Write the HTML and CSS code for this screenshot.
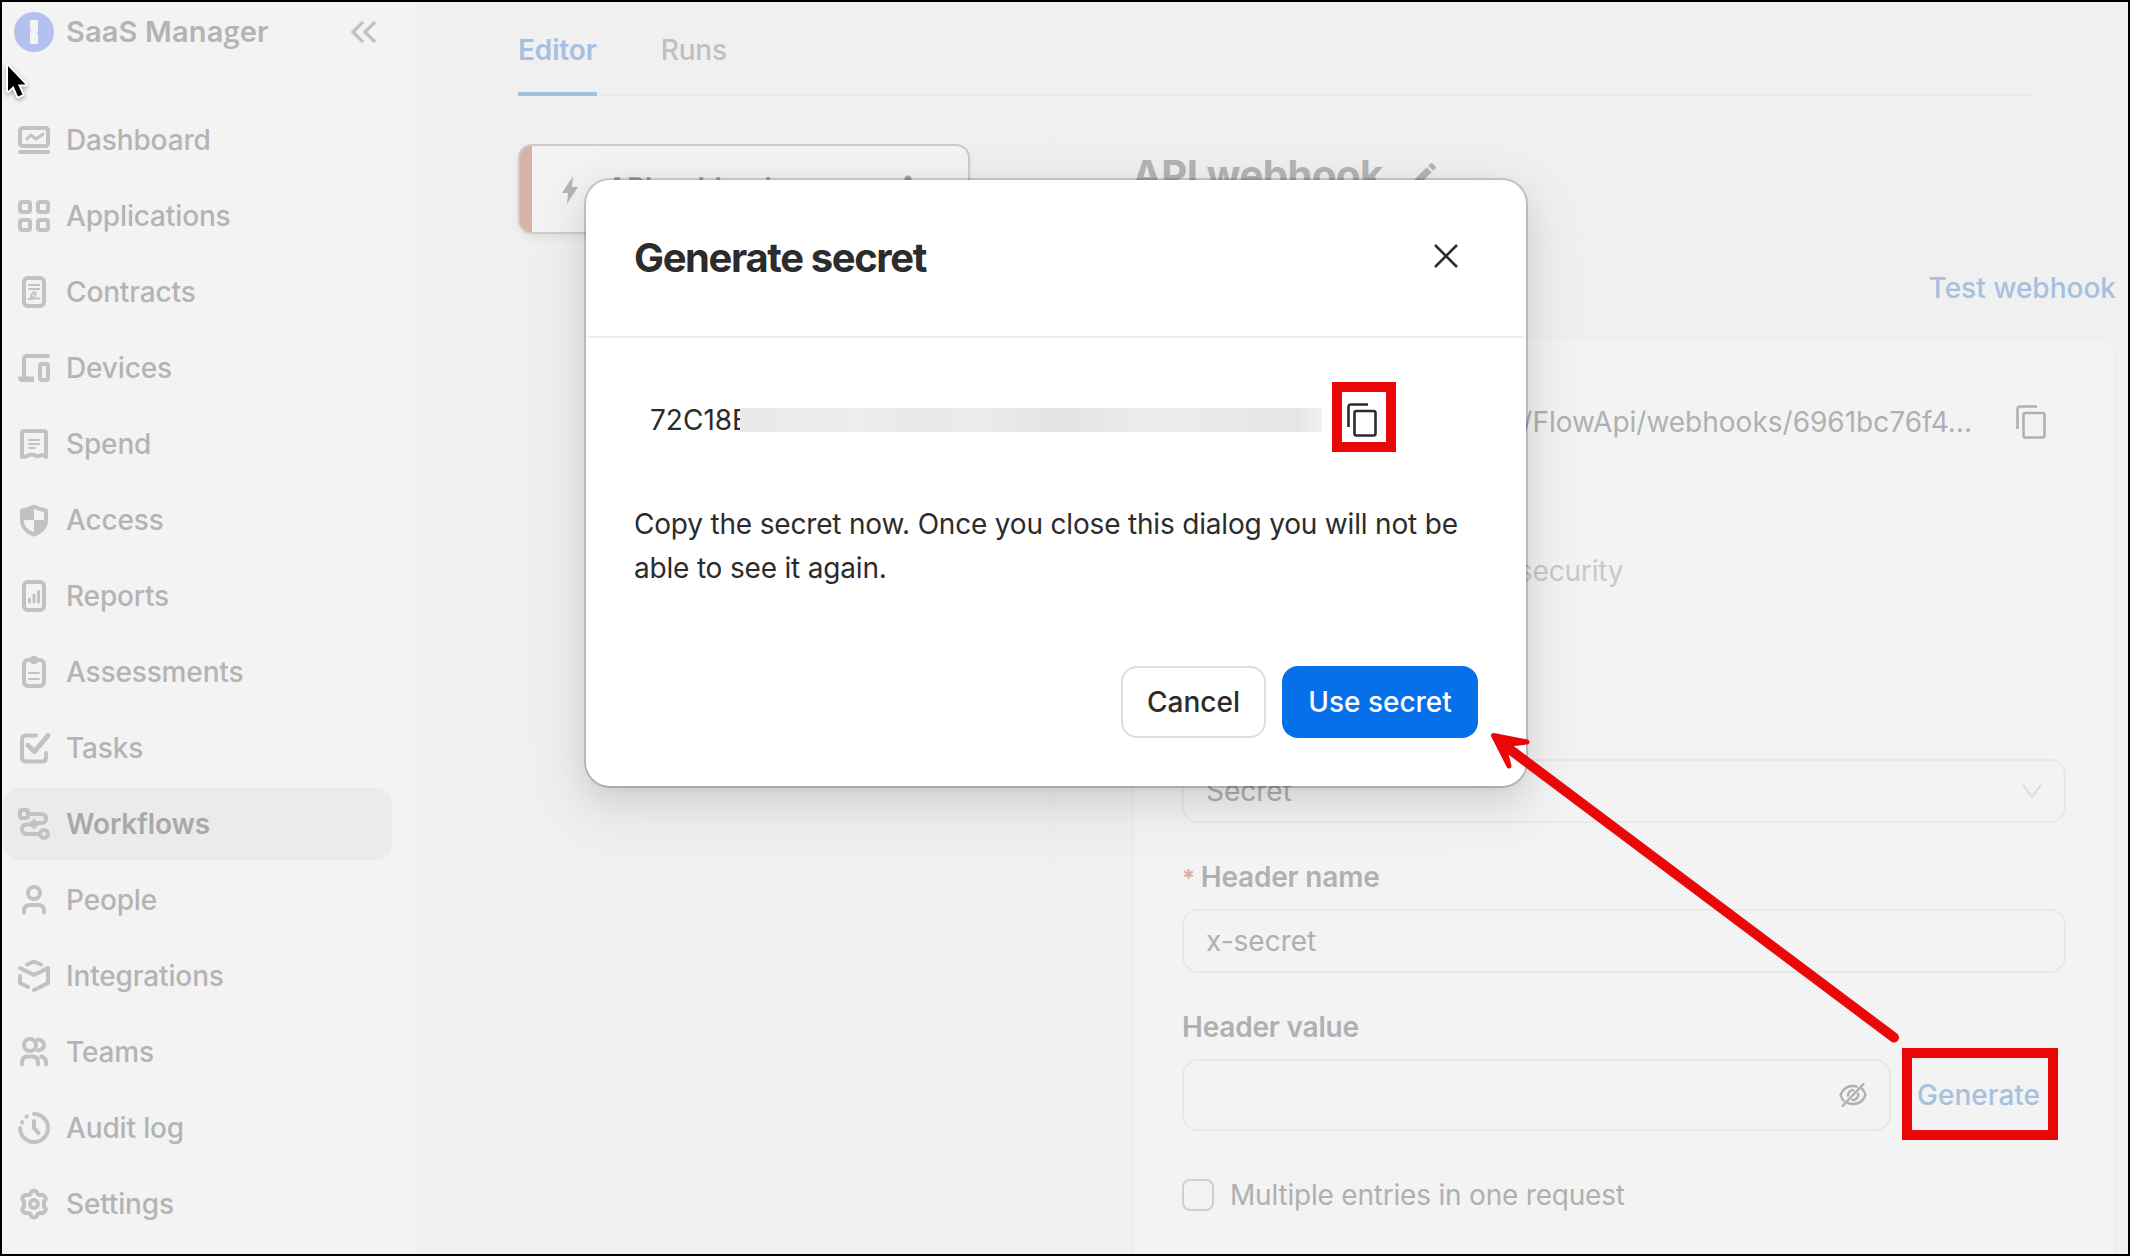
FILE: index.html
```html
<!DOCTYPE html>
<html lang="en">
<head>
<meta charset="utf-8">
<title>SaaS Manager - Workflows</title>
<link rel="stylesheet" href="styles.css">
</head>
<body>
<div class="app">
  <aside class="sidebar">
    <header class="brand">
      <svg class="logo" viewBox="0 0 40 40"><circle cx="20" cy="20" r="20" fill="#b3c1f0"/><path fill="#f3f3f3" d="M17.200 8h5.600a1.200 1.200 0 0 1 1.200 1.200v10.300l-1.500 1.300 1.500 1.300v8.700a1.200 1.200 0 0 1-1.200 1.200h-5.600a1.200 1.200 0 0 1-1.200-1.200V19.500l1.500-1.300-1.500-1.300V9.200A1.200 1.200 0 0 1 17.200 8z"/></svg>
      <span class="brand-name">SaaS Mana<span class="alt">g</span>er</span>
      <svg class="collapse" viewBox="0 0 26 22"><path d="M12 1 2 11l10 10M24 1 14 11l10 10"/></svg>
    </header>
    <nav class="nav">
      <a class="item"><svg viewBox="0 0 32 32"><rect x="2" y="4" width="28" height="18" rx="2.500"/><path d="M2 28h28"/><path class="w3" d="m9 15 4-4 5 4 7-5"/></svg>Dashboard</a>
      <a class="item"><svg viewBox="0 0 32 32"><rect x="2" y="2" width="10" height="10" rx="2"/><rect x="20" y="2" width="10" height="10" rx="2"/><rect x="2" y="20" width="10" height="10" rx="2"/><rect x="20" y="20" width="10" height="10" rx="2"/></svg>Applications</a>
      <a class="item"><svg viewBox="0 0 32 32"><rect x="6" y="2" width="20" height="28" rx="4"/><path class="w2" d="M11 9h10M11 13h10M10.500 23c4 0 8-4 7-6s-5 1-4.500 4 3.500 1.500 4.500 1.500h4"/></svg>Contracts</a>
      <a class="item"><svg viewBox="0 0 32 32"><path d="M30 4H9Q6 4 6 7v18"/><path class="solid" d="M0 24.500h16V30H4q-4 0-4-5.500z"/><rect x="22" y="12" width="8" height="16" rx="2"/></svg>Devices</a>
      <a class="item"><svg viewBox="0 0 32 32"><path d="M4 29V5q0-2 2-2h20q2 0 2 2v24q-3-3-6-1.500-3 1.500-6-.5-3-1-6 .5-3 1.500-6 1.500z"/><path class="w2" d="M11 12h10M11 16h10M11 20h6"/></svg>Spend</a>
      <a class="item"><svg viewBox="0 0 32 32"><path d="M16 2.500c3.500 2 7 3.500 12 4V17c0 6-5 11-12 13.500C9 28 4 23 4 17V6.500c5-.5 8.500-2 12-4z"/><path class="solid" d="M4 6 16 2v14H4zM16 16h12c0 7-5 12-12 14z"/></svg>Access</a>
      <a class="item"><svg viewBox="0 0 32 32"><rect x="6" y="2" width="20" height="28" rx="4"/><path class="w3" d="M11.500 22v-3M16 22v-7M20.500 22V11.500"/></svg>Reports</a>
      <a class="item"><svg viewBox="0 0 32 32"><rect x="6" y="4" width="20" height="26" rx="4"/><path class="w2" d="M11 17h10M11 23h10"/><path class="solid" d="M14 0h4l2 2v4l-2 2h-4l-2-2V2z"/></svg>Assessments</a>
      <a class="item"><svg viewBox="0 0 32 32"><path d="M18 3.500H8q-4 0-4 4v18q0 4 4 4h16q4 0 4-4V21"/><path class="w4b" d="m10 13.500 6.500 6L30 3.500"/></svg>Tasks</a>
      <a class="item active"><svg viewBox="0 0 32 32"><rect x="2" y="2" width="8" height="8" rx="2"/><path d="M12 6h11.500q4.500 0 4.500 4.500T23.500 15H18M14 16.500H9q-5 0-5 4.700T9 26h12"/><circle cx="26" cy="26" r="4"/><path class="solid" d="m16 10.500 5.500 5.500-5.500 5.500-5.500-5.500z"/></svg>Workflows</a>
      <a class="item"><svg viewBox="0 0 32 32"><circle cx="16" cy="9" r="6"/><path d="M6 28.500v-1.500q0-6 6.500-6h7q6.500 0 6.500 6v1.500"/></svg>People</a>
      <a class="item"><svg viewBox="0 0 32 32"><path d="m9 4.500 7-3 7 3M2 8l14 7 14-7v15l-14 7M2 16v7l8 4"/></svg>Integrations</a>
      <a class="item"><svg viewBox="0 0 32 32"><circle cx="12" cy="9" r="6"/><path d="M4 28.500v-2q0-6 6-6h4q6 0 6 6v2M20 3.500q6 1 6 5.500t-6 5.500M23 20.500q5 1 5 6v2"/></svg>Teams</a>
      <a class="item"><svg viewBox="0 0 32 32"><path d="M16 2a14 14 0 1 1-14 14"/><path class="dash" d="M4 10.500l.2-.4M8.500 4.700l.4-.3"/><path d="M16 9v7l4.500 5"/></svg>Audit log</a>
      <a class="item"><svg viewBox="0 0 32 32"><path d="M13.500 3.500q2.500-2 5 0l1 2.500 2.200 1.300 2.800-.5q3 1.200 3.300 4.200L26 13.500v5l1.800 2.500q-.3 3-3.300 4.200l-2.800-.5L19.500 26l-1 2.500q-2.500 2-5 0l-1-2.500-2.200-1.300-2.800.5q-3-1.200-3.300-4.200L6 18.500v-5L4.200 11q.3-3 3.300-4.200l2.800.5L12.500 6z"/><circle cx="16" cy="16" r="4"/></svg>Settings</a>
    </nav>
  </aside>

  <main class="main">
    <div class="tabs"><span class="tab on">Editor</span><span class="tab">Runs</span></div>
    <div class="workspace">
      <section class="canvas">
        <div class="step">
          <svg class="bolt" viewBox="0 0 16 28"><path d="M11 0 0 17h6L5 28 16 11h-6z"/></svg>
          <span class="step-name">API webhook</span>
          <svg class="kebab" viewBox="0 0 8 32"><circle cx="4" cy="4" r="3.500"/><circle cx="4" cy="15" r="3.500"/><circle cx="4" cy="26" r="3.500"/></svg>
        </div>
      </section>
      <section class="detail">
        <h1 class="detail-title">API webhook
          <svg class="pencil" viewBox="0 0 24 24"><path d="M3 17.250V21h3.750L17.810 9.940l-3.750-3.750zM20.710 7.040a1 1 0 0 0 0-1.410l-2.340-2.340a1 1 0 0 0-1.410 0l-1.830 1.830 3.750 3.750z"/></svg>
        </h1>
        <div class="actions"><a class="link">Test webhook</a></div>
        <div class="panel">
          <div class="url-row"><span class="url">/FlowApi/webhooks/6961bc76f4...</span>
            <svg class="copy" viewBox="0 0 30 34"><path d="M21 1.500H4Q1.500 1.500 1.500 4v20"/><rect x="7.500" y="8" width="21" height="24.500" rx="2"/></svg>
          </div>
          <div class="security">security</div>
          <div class="field select"><span>Secret</span><svg viewBox="0 0 20 14"><path d="m1 1 9 12 9-12"/></svg></div>
          <div class="label"><i>*</i>Header name</div>
          <div class="field">x-secret</div>
          <div class="label">Header value</div>
          <div class="value-row">
            <div class="field tall"><svg viewBox="0 0 28 24"><path d="M22 4.800c2 1.600 3.600 4 4.500 7.200-2.200 6-6.500 9-12.500 9-2.200 0-4-.4-5.700-1.100M5.500 18.700C3.800 17.200 2.400 15 1.500 12 3.700 6 8 3 14 3c1.700 0 3.200.3 4.600.8M18.700 10a5 5 0 0 1-6.300 6.700M9.300 13.500a5 5 0 0 1 6-6.200M25 .5 3 23.500"/></svg></div>
            <a class="link">Generate</a>
          </div>
          <div class="check-row"><span class="check"></span>Multiple entries in one request</div>
        </div>
      </section>
    </div>
  </main>
</div>

<div class="dialog">
  <header class="dialog-head"><h2>Generate secret</h2><svg viewBox="0 0 24 24"><path d="m1 1 22 22M23 1 1 23"/></svg></header>
  <div class="secret-row">
    <span class="secret">72C18E</span><span class="redacted"></span>
    <svg class="copy" viewBox="0 0 30 34"><path d="M21 1.500H4Q1.500 1.500 1.500 4v20"/><rect x="7.500" y="8" width="21" height="24.500" rx="2"/></svg>
  </div>
  <p class="note">Copy the secret now. Once you close this dialog you will not be<br>able to see it again.</p>
  <footer class="dialog-foot"><button class="btn">Cancel</button><button class="btn primary">Use secret</button></footer>
</div>

<svg class="annotations" viewBox="0 0 2130 1256">
  <rect x="1337" y="387" width="54" height="60"/>
  <rect x="1907" y="1053" width="146" height="82"/>
  <path d="M1508 748 1894 1037.500"/>
  <path class="head" d="m1493.500 735.500 33.500 6.500-17 2-5 6 4 16z"/>
</svg>
<svg class="cursor" viewBox="0 0 28 40"><path d="M4 3v25l5.500-5 4.500 10.500 4.500-2-4.500-10h7.500z"/></svg>
<div class="frame"></div>
</body>
</html>
```
FILE: styles.css
```css
* { box-sizing: border-box; }
body { margin: 0; width: 2130px; height: 1256px; overflow: hidden; position: relative; background: #f0f0f0; font: 400 28px/40px Inter, "Liberation Sans", sans-serif; color: #b0b0b0; }
svg { fill: none; stroke: currentColor; flex: none; display: block; }
.app { display: flex; height: 1256px; }

.sidebar { width: 418px; background: #f3f3f3; border-right: 2px solid #eee; padding-left: 3px; flex: none; }
.brand { display: flex; align-items: center; height: 64px; padding-left: 11px; }
.logo { width: 40px; height: 40px; stroke: none; }
.brand-name { margin-left: 12px; margin-top: -2px; width: 273px; font-size: 29px; letter-spacing: .15px; font-weight: 600; color: #b4b4b4; white-space: nowrap; }
.alt { font-family: "Open Sans", sans-serif; }
.collapse { width: 26px; height: 22px; margin-left: 12px; stroke: #c2c2c2; stroke-width: 3.4; }
.nav { display: flex; flex-direction: column; gap: 4px; padding-top: 40px; }
.item { display: flex; align-items: center; gap: 16px; width: 389px; height: 72px; padding-left: 15px; border-radius: 16px; font-weight: 500; letter-spacing: -.15px; color: #b4b4b4; }
.item svg { width: 32px; height: 32px; stroke: #c2c2c2; stroke-width: 4; stroke-linecap: round; stroke-linejoin: round; overflow: visible; }
.item.active { background: #ebebeb; color: #a9a9a9; font-weight: 600; }
.item .w2 { stroke-width: 2; }
.item .w3 { stroke-width: 3; }
.item .w4b { stroke-width: 5; }
.item .solid { fill: #c2c2c2; stroke: none; }

.main { flex: 1; padding-left: 100px; }
.tabs { display: flex; gap: 64px; width: 1516px; height: 96px; border-bottom: 2px solid #ebebeb; padding-top: 30px; font-weight: 500; letter-spacing: -.15px; color: #c0c0c0; }
.tab { height: 66px; }
.tab.on { color: #a6c0e0; font-weight: 600; border-bottom: 4px solid #a6c0e0; }
.workspace { display: flex; }
.canvas { width: 534px; height: 1131px; margin-top: 29px; padding-top: 19px; border-right: 2px solid #eee; flex: none; }
.step { display: flex; align-items: flex-start; width: 452px; height: 90px; border: 2px solid #ccc; border-radius: 14px; background: linear-gradient(90deg, #dab0a7 12px, #f3f3f3 12px); padding: 30px 0 0 42px; box-shadow: 0 4px 8px rgba(0,0,0,.06); }
.bolt { width: 16px; height: 28px; fill: #b4b7b8; stroke: none; }
.step-name { margin-left: 29px; margin-top: -8px; width: 297px; font-size: 28px; line-height: 40px; font-weight: 600; letter-spacing: -.4px; color: #a8a8a8; }
.kebab { width: 8px; height: 32px; margin-top: -1px; fill: #a4a4a4; stroke: none; }

.detail { width: 984px; margin-left: 80px; flex: none; }
.detail-title { display: flex; align-items: flex-start; gap: 28px; margin: 0; height: 142px; padding-top: 55px; border-bottom: 2px solid #ededed; font-size: 40px; line-height: 48px; font-weight: 700; letter-spacing: -.5px; color: #b4b4b4; }
.pencil { width: 32px; height: 32px; margin-top: 8px; margin-left: -3px; fill: #b4b4b4; stroke: none; }
.actions { display: flex; justify-content: flex-end; height: 100px; padding-top: 30px; }
.link { color: #a6c0e0; font-weight: 500; }
.panel { height: 930px; border: 2px solid #eee; border-radius: 16px; background: #f3f3f3; padding: 62px 48px 0 48px; }
.url-row { display: flex; justify-content: flex-end; padding-right: 20px; height: 149px; white-space: nowrap; }
.url { margin-right: 44px; }
.copy { width: 30px; height: 34px; stroke-width: 2.600; }
.url-row .copy { margin-top: 3px; }
.security { padding-left: 336px; height: 208px; letter-spacing: -.2px; color: #c6caca; }
.field { display: flex; align-items: center; justify-content: space-between; height: 64px; width: 884px; border: 2px solid #e8e8e8; border-radius: 16px; padding: 0 22px; }
.select svg { width: 20px; height: 14px; stroke: #dadada; stroke-width: 2; }
.label { height: 86px; padding-top: 34px; font-weight: 600; letter-spacing: -.2px; }
.label i { font-style: normal; font-size: 24px; line-height: 28px; color: #dcaaa0; margin-right: 6px; }
.value-row { display: flex; align-items: center; gap: 26px; }
.tall { width: 709px; height: 72px; justify-content: flex-end; }
.tall svg { width: 28px; height: 24px; stroke-width: 2.400; }
.check-row { display: flex; align-items: center; gap: 16px; margin-top: 44px; letter-spacing: -.2px; }
.check { width: 32px; height: 32px; border: 2px solid #cfcfcf; border-radius: 8px; }

.dialog { position: absolute; left: 586px; top: 180px; width: 940px; height: 606px; border-radius: 24px; background: #fff; color: #2c2c2c; box-shadow: 0 0 0 2px rgba(0,0,0,.16), 0 12px 32px rgba(0,0,0,.09), 0 6px 12px -8px rgba(0,0,0,.12), 0 18px 56px 16px rgba(0,0,0,.06); }
.dialog-head { display: flex; align-items: center; justify-content: space-between; height: 158px; padding: 0 68px 4px 48px; border-bottom: 2px solid #f0f0f0; }
.dialog-head h2 { margin: 4px 0 0; font-size: 40px; line-height: 48px; font-weight: 700; letter-spacing: -1.380px; }
.dialog-head svg { width: 24px; height: 24px; stroke-width: 2.600; }
.secret-row { display: flex; align-items: center; height: 164px; padding-left: 64px; }
.secret { width: 90px; white-space: nowrap; }
.redacted { position: relative; width: 582px; height: 24px; margin-right: 25px; background: linear-gradient(90deg, #e9e9e9, #ededed 20%, #e9e9e9 30%, #ebebeb 42%, #e3e3e3 55%, #ececec 70%, #eaeaea 80%, #e5e5e5 96%, #f2f2f2); }
.note { margin: 0; padding-left: 48px; height: 164px; line-height: 44px; letter-spacing: -.185px; white-space: nowrap; }
.dialog-foot { display: flex; justify-content: flex-end; gap: 16px; padding-right: 48px; }
.btn { height: 72px; width: 145px; padding: 0; border: 2px solid #dedede; border-radius: 16px; background: #fff; color: #2c2c2c; font: inherit; font-weight: 500; }
.btn.primary { width: 196px; border: 0; background: #0670eb; color: #fff; }

.annotations { position: absolute; inset: 0; width: 2130px; height: 1256px; stroke: #e90707; stroke-width: 10; stroke-linecap: round; }
.annotations .head { fill: #e90707; stroke-width: 5; stroke-linejoin: round; }
.cursor { position: absolute; left: 4px; top: 63px; width: 28px; height: 40px; fill: #000; stroke: #fff; stroke-width: 4; paint-order: stroke; stroke-linejoin: round; filter: drop-shadow(0 2px 2px rgba(0,0,0,.35)); }
.frame { position: absolute; inset: 0; border: 2px solid #000; }
```
